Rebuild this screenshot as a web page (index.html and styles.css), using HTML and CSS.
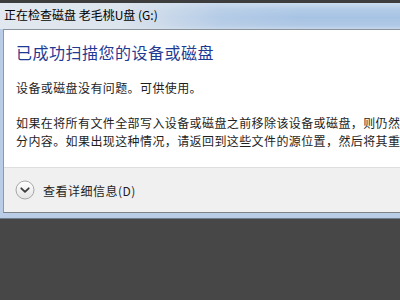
FILE: index.html
```html
<!DOCTYPE html>
<html lang="zh-CN">
<head>
<meta charset="utf-8">
<title>正在检查磁盘</title>
<link rel="stylesheet" href="styles.css">
</head>
<body>
<div class="window">
  <div class="titlebar">
    <span class="title">正在检查磁盘 老毛桃U盘 (G:)</span>
  </div>
  <div class="frame">
    <div class="panel">
      <div class="content">
        <h1 class="heading">已成功扫描您的设备或磁盘</h1>
        <p class="text">设备或磁盘没有问题。可供使用。</p>
        <p class="text para">如果在将所有文件全部写入设备或磁盘之前移除该设备或磁盘，则仍然可能丢失部<br>分内容。如果出现这种情况，请返回到这些文件的源位置，然后将其重新复制到设备或磁盘。</p>
      </div>
      <div class="footer">
        <svg class="expander" width="20" height="20" viewBox="0 0 20 20">
          <defs>
            <linearGradient id="g" x1="0" y1="0" x2="0" y2="1">
              <stop offset="0" stop-color="#ffffff"/>
              <stop offset="1" stop-color="#e4e4e4"/>
            </linearGradient>
          </defs>
          <circle cx="10" cy="10" r="9" fill="url(#g)" stroke="#a7a7a7" stroke-width="1"/>
          <path d="M6.3 8.3 L10 11.8 L13.7 8.3" fill="none" stroke="#3a3a3a" stroke-width="1.8" stroke-linecap="round" stroke-linejoin="round"/>
        </svg>
        <span class="details">查看详细信息(D)</span>
      </div>
    </div>
  </div>
</div>
</body>
</html>
```
FILE: styles.css
```css
html, body {
  margin: 0;
  padding: 0;
}
body {
  background: #474747;
  width: 400px;
  height: 300px;
  overflow: hidden;
  font-family: "Noto Sans CJK SC", "Liberation Sans", sans-serif;
}
.window {
  width: 400px;
  overflow: hidden;
  background: #b9cee6;
  padding-bottom: 5px;
  border-bottom: 1px solid #6f7d8c;
}
.titlebar {
  height: 29px;
  box-sizing: border-box;
  border-top: 3px solid #3d3d3d;
  background:
    linear-gradient(90deg, rgba(226,232,239,1) 0%, rgba(222,229,237,0.95) 30%, rgba(200,216,234,0.4) 55%, rgba(169,198,230,0) 75%),
    linear-gradient(180deg, #cbdcee 0%, #b2cbe7 25%, #a7c3e4 55%, #afc8e5 85%, #c5d6ea 100%);
  display: flex;
  align-items: center;
  padding-left: 4px;
}
.title {
  font-size: 12px;
  color: #000;
  line-height: 16px;
  white-space: nowrap;
  margin-top: -2px;
}
.frame {
  padding-left: 3px;
}
.panel {
  border-left: 1px solid #8c9aa8;
  border-top: 1px solid #8a929c;
  border-bottom: 1px solid #7f8389;
  width: 600px;
  background: #fff;
}
.content {
  padding: 12px 0 17px 12px;
  background: #fff;
}
.heading {
  margin: 0;
  font-size: 16px;
  font-weight: normal;
  line-height: 20px;
  color: #1f3a93;
  letter-spacing: 0.5px;
  white-space: nowrap;
}
.text {
  margin: 17px 0 0 0;
  font-size: 12px;
  line-height: 18px;
  color: #1e1e1e;
  letter-spacing: 0.4px;
  white-space: nowrap;
}
.footer {
  height: 44px;
  border-top: 1px solid #dedede;
  background: #f0f0f0;
  display: flex;
  align-items: center;
  padding-left: 11px;
}
.expander {
  display: block;
  margin-top: -1px;
}
.details {
  margin-left: 8px;
  font-size: 12px;
  color: #1e1e1e;
  letter-spacing: 0.5px;
  line-height: 16px;
  margin-top: 2px;
}
```
